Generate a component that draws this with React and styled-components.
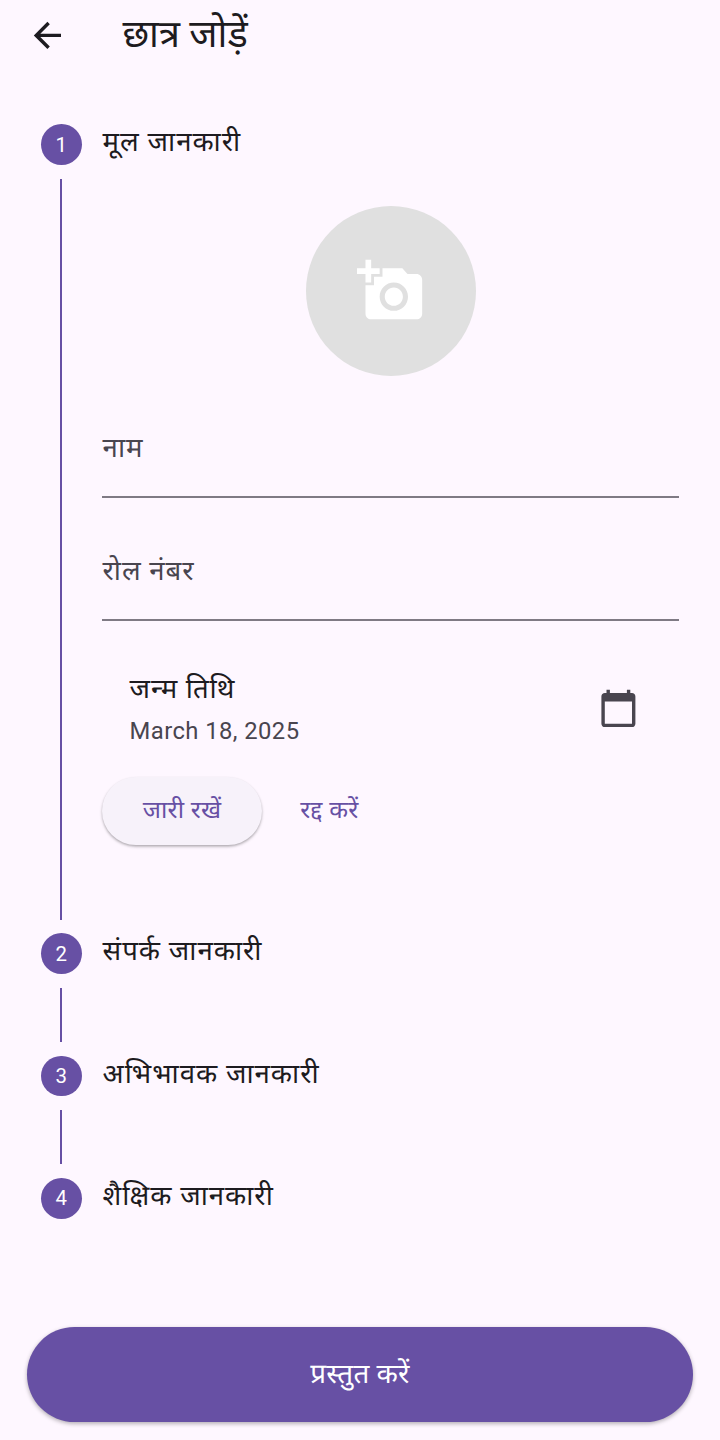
import React from "react";
import styled, { createGlobalStyle } from "styled-components";
import { MdArrowBack, MdAddAPhoto, MdCalendarToday } from "react-icons/md";

const GlobalStyle = createGlobalStyle`
  *, *::before, *::after { box-sizing: border-box; }
  body {
    margin: 0;
    background: #fef7ff;
    color: #1d1b20;
    font-family: Roboto, "Noto Sans Devanagari", "Noto Sans", sans-serif;
  }
  button { font-family: inherit; border: 0; background: none; padding: 0; cursor: pointer; }
`;

const Screen = styled.main`
  width: 720px;
  height: 1440px;
  display: flex;
  flex-direction: column;
  overflow: hidden;
`;

const AppBar = styled.header`
  display: flex;
  align-items: center;
  height: 71px;
  padding-left: 27.3px;
  gap: 54.4px;
`;

const BackButton = styled.button`
  display: flex;
  color: #1d1b20;
`;

const Title = styled.h1`
  margin: 0;
  padding-bottom: 4px;
  font-size: 38px;
  font-weight: 400;
  line-height: 48px;
`;

const Stepper = styled.ol`
  list-style: none;
  margin: 0;
  padding: 53.2px 40.8px 0;
  flex: 1;
`;

const StepRow = styled.li`
  display: flex;
  gap: 20.4px;
  height: ${(p) => p.$height}px;
`;

const Rail = styled.div`
  display: flex;
  flex-direction: column;
  align-items: center;
  width: 40.8px;
  flex: none;
`;

const StepNumber = styled.span`
  display: flex;
  align-items: center;
  justify-content: center;
  width: 40.8px;
  height: 40.8px;
  border-radius: 50%;
  background: #6750a4;
  color: #fff;
  font-size: 20.4px;
  font-weight: 400;
  line-height: 24px;
`;

const Connector = styled.span`
  flex: 1;
  width: 1.7px;
  margin: 13.6px 0;
  background: #6750a4;
`;

const StepBody = styled.div`
  flex: 1;
  display: flex;
  flex-direction: column;
  align-items: flex-start;
`;

const StepTitle = styled.h2`
  margin: 0;
  height: 36px;
  padding-left: 0.6px;
  font-size: 27.6px;
  font-weight: 400;
  line-height: 36px;
  letter-spacing: 0.97px;
`;

const Avatar = styled.button`
  display: flex;
  align-items: center;
  justify-content: center;
  align-self: center;
  width: 170px;
  height: 170px;
  margin-top: 45.6px;
  border-radius: 50%;
  background: #e0e0e0;
  color: #fff;
`;

const Field = styled.label`
  width: 100%;
  height: 82px;
  margin-top: ${(p) => p.$gap}px;
  padding: 14.4px 0 0 0.6px;
  border-bottom: 2px solid #7f7a84;
  color: #49454f;
  font-size: 27.6px;
  line-height: 36px;
  letter-spacing: 0.9px;
`;

const DateTile = styled.div`
  display: flex;
  align-items: center;
  justify-content: space-between;
  width: 100%;
  height: 122px;
  margin-top: 27px;
  padding: 0 40.8px 0 27.6px;
  color: #49454f;

  svg { margin-bottom: 1.4px; }
`;

const DateLabel = styled.div`
  color: #1d1b20;
  font-size: 27.6px;
  line-height: 38px;
  letter-spacing: 0.9px;
`;

const DateValue = styled.div`
  margin-top: 6px;
  font-size: 23.8px;
  line-height: 34px;
  letter-spacing: 0.43px;
`;

const Actions = styled.div`
  display: flex;
  gap: 13.6px;
  margin-top: 6.8px;
`;

const StepButton = styled.button`
  height: 68px;
  padding: 0 ${(p) => (p.$raised ? 40.8 : 24.6)}px 2px;
  border-radius: 34px;
  background: ${(p) => (p.$raised ? "#f7f2fa" : "transparent")};
  box-shadow: ${(p) => (p.$raised ? "0 1.7px 3px rgba(0,0,0,.26), 0 1px 2px rgba(0,0,0,.08)" : "none")};
  color: #6750a4;
  font-size: 24.5px;
  font-weight: 450;
  letter-spacing: 0.3px;
  line-height: 34px;
`;

const Submit = styled.button`
  height: 95px;
  margin: 0 27.2px 18.5px;
  padding-bottom: 1px;
  border-radius: 48px;
  background: #6750a4;
  box-shadow: 0 1.7px 4px rgba(0, 0, 0, 0.3);
  color: #fff;
  font-size: 27.8px;
  font-weight: 450;
  letter-spacing: 0.2px;
  line-height: 36px;
`;

function Step({ number, title, height, last, children }) {
  return (
    <StepRow $height={height}>
      <Rail>
        <StepNumber>{number}</StepNumber>
        {!last && <Connector />}
      </Rail>
      <StepBody>
        <StepTitle>{title}</StepTitle>
        {children}
      </StepBody>
    </StepRow>
  );
}

export default function App() {
  return (
    <Screen>
      <GlobalStyle />
      <AppBar>
        <BackButton aria-label="वापस"><MdArrowBack size={40.8} /></BackButton>
        <Title>छात्र जोड़ें</Title>
      </AppBar>
      <Stepper>
        <Step number={1} title="मूल जानकारी" height={809}>
          <Avatar aria-label="फ़ोटो जोड़ें"><MdAddAPhoto size={68} /></Avatar>
          <Field $gap={40.2}>नाम</Field>
          <Field $gap={41}>रोल नंबर</Field>
          <DateTile>
            <div>
              <DateLabel>जन्म तिथि</DateLabel>
              <DateValue>March 18, 2025</DateValue>
            </div>
            <MdCalendarToday size={40.8} />
          </DateTile>
          <Actions>
            <StepButton $raised>जारी रखें</StepButton>
            <StepButton>रद्द करें</StepButton>
          </Actions>
        </Step>
        <Step number={2} title="संपर्क जानकारी" height={122.4} />
        <Step number={3} title="अभिभावक जानकारी" height={122.4} />
        <Step number={4} title="शैक्षिक जानकारी" height={40.8} last />
      </Stepper>
      <Submit>प्रस्तुत करें</Submit>
    </Screen>
  );
}
